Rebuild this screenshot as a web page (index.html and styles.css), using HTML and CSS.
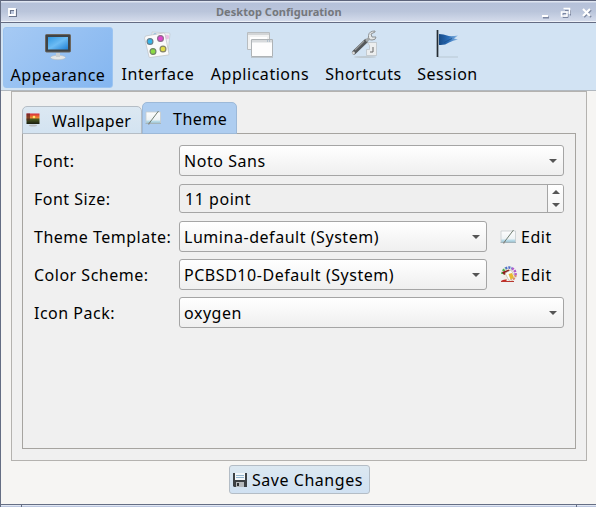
FILE: index.html
```html
<!DOCTYPE html>
<html lang="en">
<head>
<meta charset="utf-8">
<title>Desktop Configuration</title>
<link rel="stylesheet" href="styles.css">
</head>
<body>
<svg width="0" height="0" class="defs" aria-hidden="true">
  <defs>
    <linearGradient id="screen" x1="0" y1="0" x2="1" y2="1"><stop offset="0" stop-color="#2f96e0"/><stop offset=".5" stop-color="#6dbcf4"/><stop offset="1" stop-color="#1f7fd4"/></linearGradient>
    <linearGradient id="flag" x1="0" x2="1"><stop offset="0" stop-color="#164a86"/><stop offset=".5" stop-color="#2a6db8"/><stop offset="1" stop-color="#8db9e3"/></linearGradient>
    <linearGradient id="sunset" x1="0" x2="0" y1="0" y2="1"><stop offset="0" stop-color="#d8283c"/><stop offset=".4" stop-color="#f08a30"/><stop offset=".55" stop-color="#4c5a20"/><stop offset="1" stop-color="#181c10"/></linearGradient>
    <linearGradient id="paper" x1="0" x2="0" y1="0" y2="1"><stop offset="0" stop-color="#fdfdfd"/><stop offset=".7" stop-color="#eef3f5"/><stop offset="1" stop-color="#86c3da"/></linearGradient>
    <symbol id="draw" viewBox="0 0 17 16">
      <path d="M1 2h14.500v11H1z" fill="url(#paper)" stroke="#c5cbce" stroke-width=".8"/>
      <path d="M.5 13.500h15.500" stroke="#a4b5bc"/>
      <path d="M4 13.500 13.500 1" stroke="#6f7d72" stroke-width="1"/>
      <path d="M3.500 14.500 5 12" stroke="#8a8a86" stroke-width="1.300"/>
    </symbol>
  </defs>
</svg>
<div class="window">
  <header class="titlebar">
    <svg class="menu" width="9" height="9"><path d="M2 2h6v6H2z" fill="none" stroke="#69738b" stroke-width="2"/><path d="M1 1h6v6H1z" fill="none" stroke="#fff" stroke-width="1.800"/></svg>
    <h1>Desktop Configuration</h1>
    <svg class="controls" width="52" height="12">
      <g fill="none" stroke="#7c87a1" transform="translate(1 1)"><path d="M1 9.500h6" stroke-width="2"/><path d="M23 2.500h5.500v5M21 5.500h5v4h-5z"/><path d="m42 2 7 7m0-7-7 7" stroke-width="2"/></g>
      <g fill="none" stroke="#fff"><path d="M1 9h6" stroke-width="2"/><path d="M22.500 1.500h6v5.500M20.500 5h5.500v4h-5.500z" stroke-width="1.500"/><path d="m42 2 7 7m0-7-7 7" stroke-width="2.200"/></g>
    </svg>
  </header>
  <nav class="toolbar">
    <button class="tool active">
      <svg width="32" height="32"><ellipse cx="16" cy="26.500" rx="7.500" ry="2.200" fill="#e3e6e8" stroke="#b6bdc4" stroke-width=".6"/><path d="M14 22h4v4h-4z" fill="#c9cfd4"/><rect x="3.500" y="3.500" width="25" height="17.500" rx="1" fill="#3e4347" stroke="#6d665c"/><path d="M6 6h20v12.500H6z" fill="url(#screen)"/></svg>
      <span>Appearance</span>
    </button>
    <button class="tool">
      <svg width="32" height="32"><path d="m10 3 17 1q1 0 1 1l-2 19-16-2z" fill="#edf1f4" stroke="#c0c8ce" stroke-width=".7"/><circle cx="25" cy="8" r="2.300" fill="#eac2e4"/><circle cx="13" cy="6" r="2" fill="#91bfdc"/><path d="m3.500 7 18-3q1 0 1.500 1l4 20q0 1-1 1l-18 2.500q-1 0-1-1L2.500 9z" fill="#fafafa" stroke="#bdc2c6" stroke-width=".7"/><g stroke-width="1.200"><circle cx="8" cy="12.500" r="2.900" fill="#35b5ea" stroke="#697e8c"/><circle cx="18.500" cy="9.500" r="2.900" fill="#e344cf" stroke="#8d6f8a"/><circle cx="11" cy="22.500" r="2.900" fill="#8bdb43" stroke="#73846a"/><circle cx="21" cy="20" r="2.900" fill="#e0dc44" stroke="#858467"/></g></svg>
      <span>Interface</span>
    </button>
    <button class="tool">
      <svg width="32" height="32"><path d="M3.500 3.500h22v17h-22z" fill="#f1f2f2" stroke="#b8bdc0"/><path d="M4 4h21v2H4z" fill="#d2d5d7"/><path d="M6 8h17v3H6z" fill="#fff"/><path d="M7.500 10.500h21v17h-21z" fill="#fdfdfd" stroke="#aeb3b6"/><path d="M8 11h20v2.500H8z" fill="#d7dadc"/><path d="M23 12h4" stroke="#8da7bd" stroke-dasharray="1"/><path d="M7 28.500h22" stroke="#bcc5cc"/></svg>
      <span>Applications</span>
    </button>
    <button class="tool">
      <svg width="32" height="32"><ellipse cx="17" cy="28" rx="11" ry="1" fill="#bfcad2"/><path d="M19.500 13.500h9v13h-10v-6h3v-4z" fill="#eceeef" stroke="#b9bec1" stroke-width=".7"/><path d="M25 18v5h-3" fill="none" stroke="#666"/><path d="m18 12-12 11.500" stroke="#55585a" stroke-width="4.200" stroke-linecap="round"/><path d="m16 12-9 9" stroke="#96999a" stroke-width="1.200"/><circle cx="5.500" cy="24" r="1.400" fill="#ddd"/><path d="m18 12 5-4" stroke="#a5a9ab" stroke-width="3"/><path d="m27 3-4 2 1 3 4 0q0 3-4 3-4 0-3.500-4.500Q21 2 27 2z" fill="#e5e8e9" stroke="#8c9193"/></svg>
      <span>Shortcuts</span>
    </button>
    <button class="tool">
      <svg width="32" height="32"><path d="M6 28h20" stroke="#b9c8d3"/><path d="M7 5q5 0 8 1.500t11 0l-4 3 4 1q-5 1-9 3-4 3-10 2.500z" fill="url(#flag)"/><path d="M20 9.500q-4 2-8 4" stroke="#194d88" stroke-width=".7" fill="none"/><path d="M5.500 1v27" stroke="#252c32" stroke-width="1.700"/></svg>
      <span>Session</span>
    </button>
  </nav>
  <main class="panel">
    <div class="tabs">
      <button class="tab"><svg width="16" height="16"><ellipse cx="8" cy="13.500" rx="4" ry="1" fill="#b9bcbe"/><path d="M1.500 1.500h13v10.500h-13z" fill="url(#sunset)"/><circle cx="9" cy="5" r="1.300" fill="#ffe76b"/><path d="M1.500 1.500H5v7H1.500z" fill="#572322" opacity=".7"/></svg><span>Wallpaper</span></button>
      <button class="tab current"><svg width="17" height="16"><use href="#draw"/></svg><span>Theme</span></button>
    </div>
    <section class="pane">
      <label>Font:</label>
      <div class="combo wide"><span>Noto Sans</span><i class="down"></i></div>
      <label>Font Size:</label>
      <div class="spin wide"><span>11 point</span><div class="steps"><i class="up"></i><i class="down"></i></div></div>
      <label>Theme Template:</label>
      <div class="combo"><span>Lumina-default (System)</span><i class="down"></i></div>
      <button class="edit"><svg width="17" height="16"><use href="#draw"/></svg><span>Edit</span></button>
      <label>Color Scheme:</label>
      <div class="combo"><span>PCBSD10-Default (System)</span><i class="down"></i></div>
      <button class="edit"><svg width="17" height="17"><circle cx="9" cy="8" r="6.500" fill="#f1eee6"/><g fill="none" stroke-width="2.600" stroke-dasharray="2 1"><path d="M2.500 8a6.500 6.500 0 0 1 3-5.500" stroke="#4cae4c"/><path d="M5.500 2.500A6.500 6.500 0 0 1 12 2.300" stroke="#4f6fc8"/><path d="M12 2.300A6.500 6.500 0 0 1 15.500 9" stroke="#b05acb"/><path d="M15.500 9a6.500 6.500 0 0 1-4 5" stroke="#dd8a68"/></g><path d="m2 6 7-2.500 1 2L4 9z" fill="#8e1c17"/><path d="m5 7 6-3 4 7-6 3.500z" fill="#fbfbf7" stroke="#aaa28e" stroke-width=".5"/><path d="m8.500 8 3.500-1 2 4.500-3.500 2z" fill="#e8b830"/><path d="M1 15q2-2 6-1.500l-1 2z" fill="#c82721"/><path d="M1 15.500h13" stroke="#b83830"/></svg><span>Edit</span></button>
      <label>Icon Pack:</label>
      <div class="combo wide"><span>oxygen</span><i class="down"></i></div>
    </section>
  </main>
  <footer class="actions">
    <button class="save"><svg width="16" height="16"><path d="M1 1h14v14H2l-1-1z" fill="#3c4044"/><path d="M3 1h10v7H3z" fill="#f3f7fa"/><path d="M4 3.500h8M4 5.500h8" stroke="#92b4cd"/><path d="M4 10h8v5H4z" fill="#b6babd"/><path d="M5 11h2v3H5z" fill="#303437"/></svg><span>Save Changes</span></button>
  </footer>
  <div class="grip"><i></i><i></i><i></i></div>
</div>
</body>
</html>
```
FILE: styles.css
```css
* { box-sizing: border-box; }
body {
  margin: 0;
  font: 16px/22px "Noto Sans", sans-serif;
  letter-spacing: .54px;
  color: #000;
}
svg { display: block; flex: none; }
.defs { position: absolute; }
button {
  margin: 0;
  padding: 0;
  border: 0;
  background: none;
  font: inherit;
  letter-spacing: inherit;
  color: inherit;
}
span, label { white-space: nowrap; }
.window {
  width: 596px;
  height: 507px;
  display: flex;
  flex-direction: column;
  border-left: 1px solid #656e84;
  background: #f6f5f3;
  overflow: hidden;
}
.titlebar {
  height: 23px;
  flex: none;
  display: flex;
  align-items: center;
  padding: 1px 3px 0 7px;
  border-top: 1px solid #5d647b;
  border-bottom: 1px solid #646b82;
  background: linear-gradient(#dfe5f1 0 1px, #b5c1d9 2px, #bac5db 50%, #d2daea 94%, #eef2f8 95%);
}
.titlebar h1 {
  margin: 0 auto 0 199px;
  font: bold 11px/18px "Noto Sans", sans-serif;
  letter-spacing: .05px;
  color: #74777c;
}
.controls { margin-top: 2px; }
.toolbar {
  height: 68px;
  flex: none;
  display: grid;
  grid-template-columns: 110px 86px 114px 89px 75px;
  column-gap: 2px;
  padding: 4px 0 2px 2px;
  border-bottom: 1px solid #b1b8bf;
  background: #d2e3f3;
}
.tool {
  display: flex;
  flex-direction: column;
  align-items: center;
  padding-top: 2px;
  border-radius: 3px;
}
.tool span { margin-top: 2px; }
.tool.active {
  padding-top: 3px;
  border: 1px solid #9bc4f1;
  background: linear-gradient(135deg, #a6caf4, #84b6f0);
}
.tool.active span { margin-top: 1px; letter-spacing: .5px; }
.panel {
  width: 576px;
  height: 370px;
  flex: none;
  margin-left: 10px;
  padding: 10px 10px 11px;
  border: 1px solid #b4b2af;
  background: #f0f0f0;
}
.tabs {
  height: 32px;
  display: flex;
  align-items: flex-end;
}
.tab {
  width: 120px;
  height: 28px;
  display: flex;
  align-items: center;
  gap: 11px;
  padding: 0 0 0 2px;
  border: 1px solid #b5bdc5;
  border-radius: 5px 5px 0 0;
  background: linear-gradient(#dce8f2, #d3e3f1);
}
.tab span { padding-top: 2px; letter-spacing: .35px; }
.tab.current {
  width: 95px;
  height: 32px;
  border-color: #9db9d8;
  background: #aecdf0;
}
.tab.current span { letter-spacing: .5px; }
.pane {
  height: 316px;
  margin-top: -1px;
  display: grid;
  grid-template-columns: 137px 308px 65px;
  grid-auto-rows: 31px;
  gap: 7px 8px;
  align-content: start;
  padding: 11px 0 0 11px;
  border: 1px solid #a6a4a0;
}
.pane label { align-self: center; letter-spacing: .5px; }
.wide { grid-column: span 2; width: 385px; }
.combo, .spin {
  display: flex;
  align-items: center;
  justify-content: space-between;
  border: 1px solid #a5a5a5;
  border-radius: 3px;
}
.combo {
  padding: 0 6px 0 4px;
  background: linear-gradient(#fff, #efefef);
}
.spin {
  height: 29px;
  align-self: center;
  padding-left: 5px;
  background: #efefef;
}
.down, .up {
  width: 0;
  height: 0;
  border: 4px solid transparent;
}
.down { border-top-color: #555; border-bottom: 0; }
.up { border-bottom-color: #555; border-top: 0; }
.steps {
  width: 16px;
  height: 100%;
  display: flex;
  flex-direction: column;
  align-items: center;
  justify-content: space-between;
  padding: 5px 0;
  border-left: 1px solid #a5a5a5;
  border-radius: 0 2px 2px 0;
  background: linear-gradient(#fff, #f3f3f3);
}
.edit {
  display: flex;
  align-items: center;
  gap: 4px;
  padding-left: 5px;
}
.actions {
  height: 43px;
  flex: none;
  display: flex;
  justify-content: center;
  align-items: flex-start;
  padding: 4px 0 0 2px;
}
.save {
  width: 141px;
  height: 29px;
  display: flex;
  align-items: center;
  gap: 4px;
  padding-left: 2px;
  border: 1px solid #b4bdc6;
  border-radius: 3px;
  background: linear-gradient(#dce8f1, #d0e1f2);
}
.grip {
  height: 3px;
  flex: none;
  display: grid;
  grid-template-columns: 20px 555px 1fr;
  border-top: 1px solid #656e84;
  background: linear-gradient(#e1e7f3 50%, #bbc6df 50%);
}
.grip i + i { border-left: 1px solid #656e84; }
```
